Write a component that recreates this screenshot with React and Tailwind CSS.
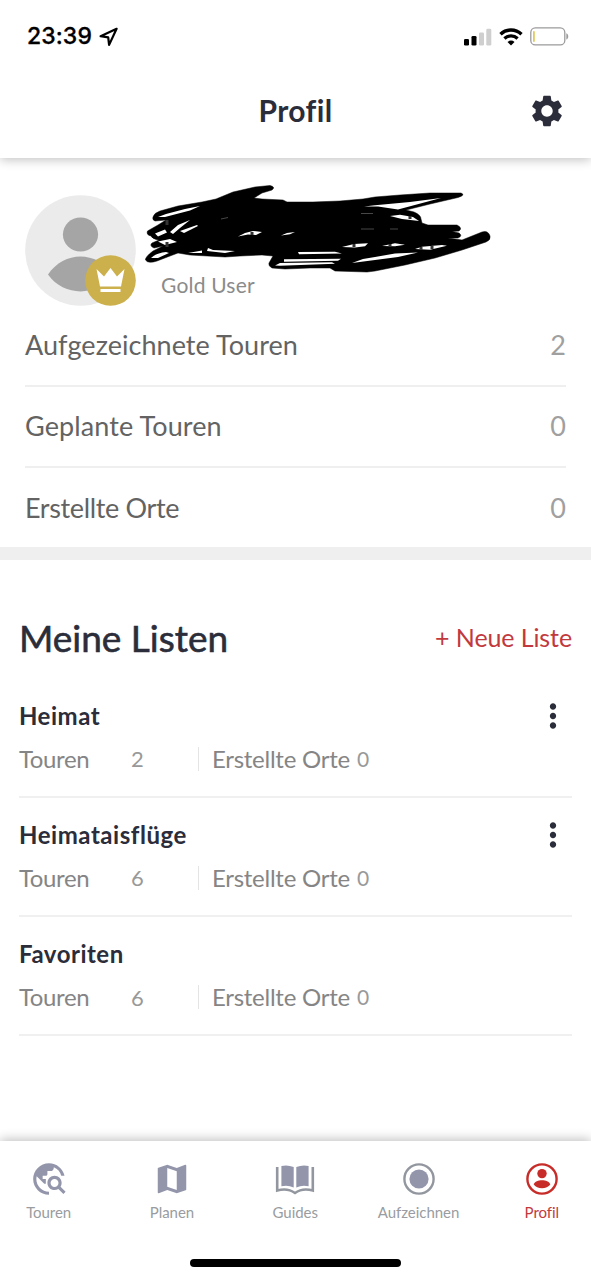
import React from "react";
import {
    MdSettings,
    MdMap,
    MdTravelExplore,
    MdMoreVert,
} from "react-icons/md";

const stats = [
    { label: "Aufgezeichnete Touren", value: 2, tracking: "tracking-[0.05px]" },
    { label: "Geplante Touren", value: 0, tracking: "tracking-[0.1px]" },
    { label: "Erstellte Orte", value: 0, tracking: "tracking-[-0.35px]" },
];

const lists = [
    { name: "Heimat", tours: 2, places: 0, menu: true, tracking: "tracking-[0.5px]" },
    { name: "Heimataisflüge", tours: 6, places: 0, menu: true, tracking: "tracking-[0.55px]" },
    { name: "Favoriten", tours: 6, places: 0, menu: false, tracking: "tracking-[0.5px]" },
];

function StatusBar() {
    return (
        <div className="flex h-[72px] items-center justify-between pl-[27px] pr-[22px] pt-px">
            <div className="flex items-center gap-[7px] font-['Inter',sans-serif] text-black">
                <span className="text-[23px] leading-none font-medium tracking-[0.1px] [-webkit-text-stroke:0.3px]">
                    23:39
                </span>
                <svg width="20" height="20" viewBox="0 0 20 20" fill="none">
                    <path
                        d="M17.6 1.8 1.6 9.2l7.6 1.2.9 7.5z"
                        stroke="#000"
                        strokeWidth="2.2"
                        strokeLinejoin="round"
                    />
                </svg>
            </div>
            <div className="flex items-center">
                <svg width="28" height="18" viewBox="0 0 28 18">
                    <rect x="0" y="11" width="5" height="6.5" rx="1.3" />
                    <rect x="7.5" y="8" width="5" height="9.5" rx="1.3" />
                    <rect x="15" y="4.5" width="5" height="13" rx="1.3" fill="#cfcfcf" />
                    <rect x="22.3" y="0.8" width="5" height="16.7" rx="1.3" fill="#cfcfcf" />
                </svg>
                <svg className="ml-[7px]" width="24" height="18" viewBox="0 0 24 18" fill="none">
                    <path d="M1.5 6.2a15.2 15.2 0 0 1 21 0" stroke="#000" strokeWidth="3.4" />
                    <path d="M5.4 10.5a9.6 9.6 0 0 1 13.2 0" stroke="#000" strokeWidth="3.2" />
                    <path d="M8.5 14a5 5 0 0 1 7 0L12 17.6z" fill="#000" />
                </svg>
                <svg className="ml-[7px]" width="39" height="19" viewBox="0 0 39 19">
                    <rect x="0.8" y="0.9" width="34" height="17" rx="4.5" fill="none" stroke="#9b9b9b" strokeWidth="1.3" />
                    <rect x="3" y="4" width="1.8" height="11" rx="0.9" fill="#e3c95a" />
                    <path d="M36.3 6.2c2.6 1 2.6 5.4 0 6.4z" fill="#9b9b9b" />
                </svg>
            </div>
        </div>
    );
}

// name is scribbled over
function Scribble() {
    return (
        <svg className="block" width="360" height="100" viewBox="140 180 360 100">
            <path
                d="M153 217Q154 213 160 211L178 206 202 202 216 199 233 192 255 187 270 185.500Q276 187 272 190L262 193 254 198 262 199 283 200 287 202 313 202 340 201 363 199 375 197 400 195 430 193 461 193Q466 195 458 197.500L430 204 406 210 414 212Q421 215 421 219L422 223 428 225 457 225Q463 228 459 231L452 231.500 459 233Q463 236 458 238L448 238 462 240 482 232Q488 230 490 236Q491 240 486 242L462 250 435 258 405 265 375 271 367 272 335 271 330 268 310 268 285 269 272 268Q268 266 269 263L273 256 262 255 240 256 225 257 190 255 178 253 170 256 157 261Q148 264 145.500 260Q145 257 153 251L163 246 154 248Q149 246 152 243L159 240Q152 239 151 236Q146 235 147.500 231L158 225 166 220 155 221Q152 220 153 217z"
                fill="#000"
                stroke="#000"
                strokeWidth="0.5"
                strokeLinejoin="round"
            />
            <g fill="#fff">
                <path d="m158 217 8-3 19-5 15-3-10 4.500-25 6.500zM170 232l8-7 12-5-10 8-7 6zM180 231l17-6 1 1-14 7zM155 233.500l10-4 2 3-9 4z" />
                <path d="m158 241.500 12-2.500 7 3-12 3zM151 258q5-5 15-6l3 1-11 5zM188 253l14-2.500v2.500zM207 251l1-3 5 2 22 1-10 2z" />
                <path d="m238 236.500 7-3.500 8-2 9 1-6 3-8-.5zM281 235.500l6-2.500 8-1-5 2.200z" />
                <path d="m298 252 37-.3 7 1.800-43 .7zM284 259.300l57-.5-3 2-54 1zM275 265.500l5-2.500 52-.8 3 1.600-55 2z" />
                <path d="m342 247 8-2 4-1 14-.8-3 3-10 1.300zM352 263l11-4 12-2 20-3.500 23-1-20 4.500-23 3z" />
                <path d="m364 206.500 11-1.200 35-3.300 31-4-43 11.500-20-3zM390 216l10-1.200 13 2.200 6 4-17-2z" />
                <path d="m382 246 13-2.800 10 1.600-10 1.500zM415 249l7-2.200 20-1.800 5 .8-17 4z" />
            </g>
            <path
                d="M167 220v5M167 242v5M252 232v3M354 244v3M410 216v3M390 244v3M421 247v3M432 246v3"
                stroke="#333"
                strokeWidth="3"
            />
            <path d="M361 213.500h12M361 229h13M390 229h8M221 219l7-1.500" stroke="#666" strokeWidth="0.7" />
        </svg>
    );
}

function Avatar() {
    return (
        <svg width="112" height="112" viewBox="0 0 112 112">
            <circle cx="55.5" cy="55.5" r="55.3" fill="#ebebeb" />
            <ellipse cx="55.5" cy="39.5" rx="17.6" ry="17" fill="#a5a5a5" />
            <path d="M23 79.5C39 55.5 72 55.5 88 79.5C72 102 39 102 23 79.5z" fill="#a5a5a5" />
            <circle cx="85.5" cy="85.5" r="25.3" fill="#ccb04c" />
            <path d="m71.5 74 7.5 7.500 6.500-8.500 6.500 8.500 7.500-7.500-3.500 17.500H75zM75.5 94h20v3h-20z" fill="#fff" />
        </svg>
    );
}

function BookIcon() {
    return (
        <svg width="40" height="34" viewBox="0 0 40 34" fill="#9396ab">
            <path d="M6.4 4Q12.5 2.500 18.700 5V25.500Q12.500 22.500 6.400 24.300zM21.300 5Q27.500 2.500 33.600 4V24.300Q27.500 22.500 21.300 25.500z" />
            <path
                d="M2.200 5V28.500Q12.500 25.500 20 31Q27.500 25.500 37.800 28.500V5"
                fill="none"
                stroke="#92969e"
                strokeWidth="2.6"
            />
        </svg>
    );
}

function RecordIcon() {
    return (
        <svg width="32" height="32" viewBox="0 0 32 32">
            <circle cx="16" cy="16" r="14.6" fill="none" stroke="#92969e" strokeWidth="2.4" />
            <circle cx="16" cy="16" r="9.6" fill="#9396ab" />
        </svg>
    );
}

function ProfileIcon() {
    return (
        <svg width="32" height="32" viewBox="0 0 32 32" fill="#c72c28">
            <circle cx="16" cy="16" r="14.6" fill="none" stroke="#c72c28" strokeWidth="2.4" />
            <circle cx="16" cy="10.6" r="4.7" />
            <path d="M7.6 21.3C10 15.8 22 15.8 24.4 21.3C21 26.5 11 26.5 7.6 21.3z" />
        </svg>
    );
}

function NavItem({ icon, label, active }) {
    return (
        <div
            className={`flex w-[123.3px] shrink-0 flex-col items-center ${
                active ? "text-[#c2393d]" : "text-[#999ca0]"
            }`}
        >
            <div className="flex h-9 items-center text-[#9396ab]">{icon}</div>
            <span className="mt-[5px] text-[15px] leading-5 tracking-[-0.05px]">
                {label}
            </span>
        </div>
    );
}

export default function App() {
    return (
        <div className="flex h-[1280px] w-[591px] flex-col overflow-hidden bg-white font-['Lato',sans-serif]">
            <header className="relative h-[158px] shrink-0 bg-white shadow-[0_2px_10px_rgba(0,0,0,0.24)]">
                <StatusBar />
                <div className="grid h-[78px] grid-cols-3 items-center">
                    <h1 className="col-start-2 -mt-0.5 text-center text-[30px] leading-none font-bold tracking-[0.4px] text-[#2b2d3a]">
                        Profil
                    </h1>
                    <MdSettings className="mr-[25px] size-[38px] justify-self-end text-[#2b2d3a]" />
                </div>
            </header>

            <section className="h-[389px] shrink-0 px-[25px] pt-[37px]">
                <div className="flex h-[111px]">
                    <Avatar />
                    <div className="-mt-[15px] ml-[3px] w-[360px]">
                        <Scribble />
                        <p className="-mt-[7px] ml-[21px] text-[21px] leading-6 tracking-[0.2px] text-[#8b8b8b]">
                            Gold User
                        </p>
                    </div>
                </div>
                {stats.map((item) => (
                    <div
                        key={item.label}
                        className="flex h-[81px] items-center justify-between border-b-2 border-[#efefef] text-[27px] text-[#636363] last:border-0"
                    >
                        <span className={item.tracking}>{item.label}</span>
                        <span className="text-[#a0a0a0]">{item.value}</span>
                    </div>
                ))}
            </section>

            <div className="h-[13px] shrink-0 bg-[#efefef]" />

            <section className="flex-1 px-[19px] pt-[50px]">
                <div className="flex h-14 items-center justify-between">
                    <h2 className="text-[37px] text-[#2b2d3a] [-webkit-text-stroke:0.6px]">
                        Meine Listen
                    </h2>
                    <span className="text-[25px] tracking-[-0.1px] text-[#c2393d]">
                        + Neue Liste
                    </span>
                </div>
                <div className="mt-[12.5px]">
                    {lists.map((list) => (
                        <div
                            key={list.name}
                            className="h-[119.3px] border-b-2 border-[#f0f0f0] pt-[15px]"
                        >
                            <div className="flex h-11 items-center justify-between">
                                <h3
                                    className={`text-[24px] font-bold text-[#2b2d3a] ${list.tracking}`}
                                >
                                    {list.name}
                                </h3>
                                {list.menu && (
                                    <MdMoreVert className="size-[38px] text-[#2b2d3a]" />
                                )}
                            </div>
                            <div className="flex h-[42px] items-center text-[24px] text-[#858585]">
                                <span className="w-[112px] tracking-[-0.4px]">
                                    Touren
                                </span>
                                <span className="w-[67px] text-[22px] text-[#999]">
                                    {list.tours}
                                </span>
                                <span className="mr-[13px] h-6 w-px bg-[#e4e4e4]" />
                                <span className="tracking-[-0.25px]">
                                    Erstellte Orte
                                </span>
                                <span className="ml-[7px] text-[21px] text-[#999]">
                                    {list.places}
                                </span>
                            </div>
                        </div>
                    ))}
                </div>
            </section>

            <nav className="relative h-[139px] shrink-0 bg-white pt-5 shadow-[0_-2px_10px_rgba(0,0,0,0.24)]">
                <div className="-mx-[13px] flex">
                    <NavItem icon={<MdTravelExplore size={38} />} label="Touren" />
                    <NavItem icon={<MdMap size={38} />} label="Planen" />
                    <NavItem icon={<BookIcon />} label="Guides" />
                    <NavItem icon={<RecordIcon />} label="Aufzeichnen" />
                    <NavItem icon={<ProfileIcon />} label="Profil" active />
                </div>
                <div className="mx-auto mt-[37px] h-2 w-[211px] rounded-full bg-black" />
            </nav>
        </div>
    );
}
